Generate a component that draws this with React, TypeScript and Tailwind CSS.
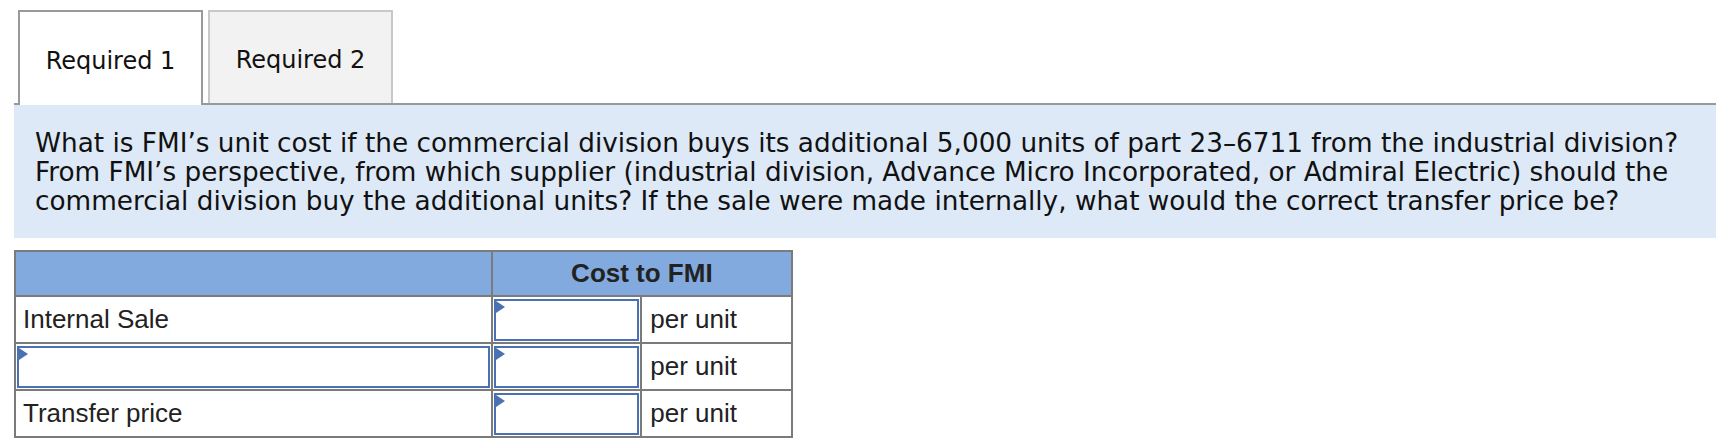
import React from 'react';

const AnswerBox = () => (
  <div className="relative px-px pt-[2px] pb-px">
    <input type="text" className="block h-[42px] w-full border-2 border-[#4a72b2] bg-white outline-none" />
    {/* little blue marker in the corner */}
    <span className="absolute left-[3px] top-[4px] h-0 w-0 border-y-[6px] border-y-transparent border-l-[9px] border-l-[#4a72b2]" />
  </div>
);

const rows = [
  { label: 'Internal Sale' },
  { label: null },
  { label: 'Transfer price' },
];

export default function App() {
  return (
    <div className="w-[1730px] h-[446px] bg-white">
      <div className="ml-[14px] w-[1702px] pt-[10px]">
        {/* tabs */}
        <div className="flex items-end gap-[5px] border-b-2 border-[#999999] pl-[4px] font-['DejaVu_Sans',sans-serif] text-[24px] text-[#111]">
          <div className="-mb-[2px] flex h-[95px] w-[185px] items-center justify-center border-2 border-b-0 border-[#999999] bg-white pt-[4px]">
            Required 1
          </div>
          <div className="flex h-[93px] w-[185px] items-center justify-center border-2 border-b-0 border-[#c8c8c8] bg-[#f2f2f2] pt-[4px]">
            Required 2
          </div>
        </div>

        {/* question */}
        <div className="bg-[#dde9f7] px-[21px] pt-[24px] pb-[22px] font-['DejaVu_Sans',sans-serif] text-[26.3px] leading-[29px] text-[#111]">
          What is FMI’s unit cost if the commercial division buys its additional 5,000 units of part 23–6711 from the industrial division?
          From FMI’s perspective, from which supplier (industrial division, Advance Micro Incorporated, or Admiral Electric) should the
          commercial division buy the additional units? If the sale were made internally, what would the correct transfer price be?
        </div>

        {/* answer table */}
        <table className="mt-[12px] w-[779px] border-collapse border-2 border-[#7b7b7b] font-['Liberation_Sans',Arial,sans-serif] text-[26px] text-[#222]">
          <colgroup>
            <col className="w-[478px]" />
            <col className="w-[150px]" />
            <col className="w-[151px]" />
          </colgroup>
          <thead>
            <tr className="h-[45px] bg-[#83aade]">
              <th className="border-2 border-[#7b7b7b]" />
              <th colSpan={2} className="border-2 border-[#7b7b7b] text-center font-bold">
                Cost to FMI
              </th>
            </tr>
          </thead>
          <tbody>
            {rows.map((r, i) => (
              <tr key={i} className="h-[46px]">
                <td className={`border-2 border-[#7b7b7b] ${r.label ? 'px-[7px]' : 'p-0'}`}>
                  {r.label ?? <AnswerBox />}
                </td>
                <td className="border-2 border-[#7b7b7b] p-0">
                  <AnswerBox />
                </td>
                <td className="border-2 border-[#7b7b7b] px-[8px]">per unit</td>
              </tr>
            ))}
          </tbody>
        </table>
      </div>
    </div>
  );
}
